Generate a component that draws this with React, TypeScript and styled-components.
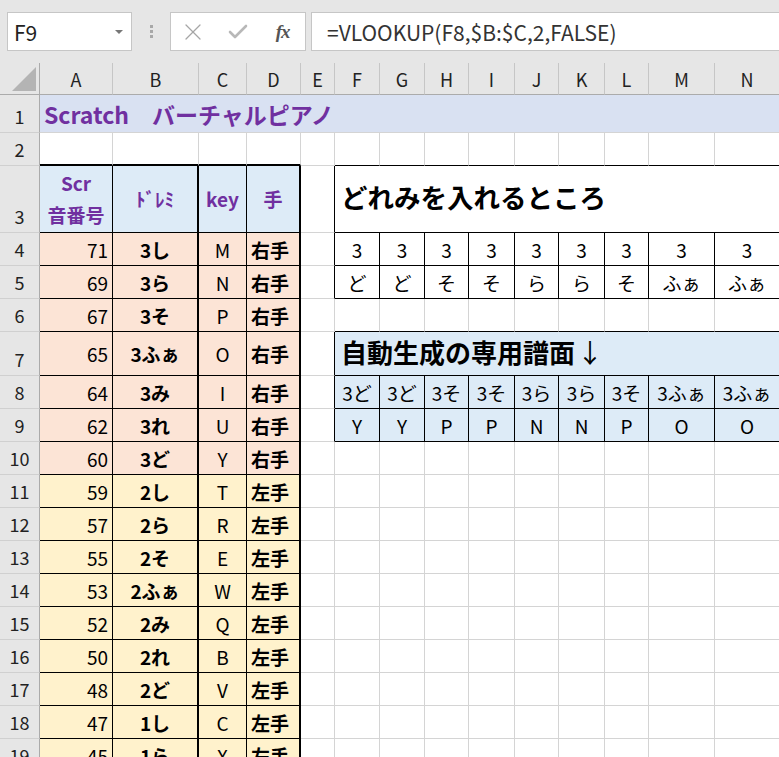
import React from "react";
import styled, { createGlobalStyle } from "styled-components";
import { X, Check } from "lucide-react";

const FONT = `"Noto Sans CJK JP", "Noto Sans", sans-serif`;
const GRID = "#d4d4d4";
const BLACK1 = "1px solid #000";
const BLACK2 = "2px solid #000";
const LAVENDER = "#d9e1f2";
const BLUE = "#ddebf7";
const SALMON = "#fce4d6";
const CREAM = "#fff2cc";
const PURPLE = "#7030a0";

const COLS = ["A", "B", "C", "D", "E", "F", "G", "H", "I", "J", "K", "L", "M", "N"];
const COL_W = [73, 86, 48, 54, 34, 45, 45, 44, 46, 44, 46, 44, 66, 65];
const ROW_H = [38, 33, 67, 33, 33, 33, 44, 33, 33, 33, 33, 33, 33, 33, 33, 33, 33, 33, 33];

const GlobalStyle = createGlobalStyle`
  html, body {
    margin: 0;
    padding: 0;
    background: #e6e6e6;
    overflow: hidden;
  }
  body {
    font-family: ${FONT};
  }
`;

const Page = styled.div`
  width: 779px;
  height: 757px;
  overflow: hidden;
  background: #fff;
`;

/* ---------- formula bar ---------- */

const Toolbar = styled.div`
  height: 63px;
  background: #e6e6e6;
  display: flex;
  align-items: flex-start;
  padding-top: 12px;
  box-sizing: border-box;
`;

const FieldBox = styled.div<{ $w?: number }>`
  height: 39px;
  box-sizing: border-box;
  background: #fff;
  border: 1px solid #c6c6c6;
  display: flex;
  align-items: center;
  ${(p) => (p.$w ? `width: ${p.$w}px;` : "flex: 1;")}
`;

const NameBox = styled(FieldBox)`
  margin-left: 7px;
  padding: 0 7px 0 6px;
  justify-content: space-between;
  font-size: 21px;
  color: #222;
`;

const DropArrow = styled.span`
  width: 0;
  height: 0;
  border-left: 4px solid transparent;
  border-right: 4px solid transparent;
  border-top: 4px solid #777;
  margin-right: 1px;
`;

const Grip = styled.div`
  width: 38px;
  height: 39px;
  display: flex;
  flex-direction: column;
  align-items: center;
  justify-content: center;
  gap: 2px;
`;

const GripDot = styled.span`
  width: 3px;
  height: 3px;
  background: #a8a8a8;
`;

const IconBox = styled(FieldBox)`
  justify-content: center;
`;

const IconSlot = styled.span`
  width: 45px;
  display: flex;
  align-items: center;
  justify-content: center;
`;

const FxMark = styled.span`
  font-family: "Liberation Serif", serif;
  font-style: italic;
  font-weight: bold;
  font-size: 19px;
  color: #555;
  letter-spacing: -1px;
`;

const FormulaBox = styled(FieldBox)`
  margin-left: 5px;
  padding-left: 15px;
  border-right: none;
  font-size: 21px;
  color: #333;
`;

/* ---------- sheet grid ---------- */

const Sheet = styled.div`
  display: grid;
  grid-template-columns: 40px ${COL_W.map((w) => `${w}px`).join(" ")};
  grid-template-rows: 32px ${ROW_H.map((h) => `${h}px`).join(" ")};
  width: 780px;
  font-family: ${FONT};
`;

const Corner = styled.div`
  background: #e6e6e6;
  border-right: 1px solid #ababab;
  border-bottom: 1px solid #ababab;
  display: flex;
  align-items: flex-end;
  justify-content: flex-end;
  padding: 0 3px 3px 0;
`;

const CornerTriangle = styled.div`
  width: 24px;
  height: 24px;
  background: #b4b4b4;
  clip-path: polygon(100% 0, 100% 100%, 0 100%);
`;

const ColHead = styled.div`
  background: #e6e6e6;
  border-right: 1px solid #c6c6c6;
  border-bottom: 1px solid #ababab;
  display: flex;
  align-items: center;
  justify-content: center;
  font-size: 18px;
  color: #222;
`;

const RowHead = styled.div`
  background: #e6e6e6;
  border-right: 1px solid #ababab;
  border-bottom: 1px solid #d0d0d0;
  display: flex;
  align-items: flex-end;
  justify-content: center;
  padding-bottom: 3px;
  box-sizing: border-box;
  font-size: 18px;
  color: #222;
`;

type Align = "left" | "center" | "right";

const justify: Record<Align, string> = {
  left: "flex-start",
  center: "center",
  right: "flex-end",
};

const CellBox = styled.div<{
  $bg: string;
  $right: string;
  $bottom: string;
  $align: Align;
  $bold: boolean;
  $size: number;
  $color: string;
  $span: number;
  $pad: number;
  $lift: number;
}>`
  grid-column: span ${(p) => p.$span};
  box-sizing: border-box;
  min-width: 0;
  display: flex;
  align-items: center;
  justify-content: ${(p) => justify[p.$align]};
  padding: 0 ${(p) => p.$pad}px ${(p) => p.$lift}px;
  background: ${(p) => p.$bg};
  border-right: ${(p) => p.$right};
  border-bottom: ${(p) => p.$bottom};
  font-size: ${(p) => p.$size}px;
  font-weight: ${(p) => (p.$bold ? 700 : 400)};
  color: ${(p) => p.$color};
  white-space: nowrap;
  overflow: hidden;
`;

const TwoLine = styled.div`
  display: flex;
  flex-direction: column;
  align-items: center;
  line-height: 32px;
`;

const ThinArrow = styled.span`
  font-weight: 400;
  margin-left: 2px;
`;

type CellSpec = {
  text?: React.ReactNode;
  bg?: string;
  right?: string;
  bottom?: string;
  align?: Align;
  bold?: boolean;
  size?: number;
  color?: string;
  span?: number;
  pad?: number;
  lift?: number;
};

/* ---------- sheet data ---------- */

const noteTable: [number, string, string, string][] = [
  [71, "3し", "M", "右手"],
  [69, "3ら", "N", "右手"],
  [67, "3そ", "P", "右手"],
  [65, "3ふぁ", "O", "右手"],
  [64, "3み", "I", "右手"],
  [62, "3れ", "U", "右手"],
  [60, "3ど", "Y", "右手"],
  [59, "2し", "T", "左手"],
  [57, "2ら", "R", "左手"],
  [55, "2そ", "E", "左手"],
  [53, "2ふぁ", "W", "左手"],
  [52, "2み", "Q", "左手"],
  [50, "2れ", "B", "左手"],
  [48, "2ど", "V", "左手"],
  [47, "1し", "C", "左手"],
  [45, "1ら", "X", "左手"],
];

const inputOctaves = ["3", "3", "3", "3", "3", "3", "3", "3", "3"];
const inputNotes = ["ど", "ど", "そ", "そ", "ら", "ら", "そ", "ふぁ", "ふぁ"];
const scoreNames = ["3ど", "3ど", "3そ", "3そ", "3ら", "3ら", "3そ", "3ふぁ", "3ふぁ"];
const scoreKeys = ["Y", "Y", "P", "P", "N", "N", "P", "O", "O"];

function buildSheet(): (CellSpec | null)[][] {
  const rows: (CellSpec | null)[][] = ROW_H.map(() => COLS.map(() => ({})));
  const set = (r: number, c: number, spec: CellSpec) => {
    rows[r - 1][c] = { ...rows[r - 1][c], ...spec };
  };
  const cover = (r: number, from: number, to: number) => {
    for (let c = from; c <= to; c++) rows[r - 1][c] = null;
  };

  // title band
  set(1, 0, {
    text: "Scratch　バーチャルピアノ",
    bg: LAVENDER,
    bold: true,
    color: PURPLE,
    size: 23,
    span: 14,
    pad: 4,
    right: "none",
  });
  cover(1, 1, 13);

  // top edges of the tables
  for (let c = 0; c <= 3; c++) set(2, c, { bottom: BLACK2 });
  for (let c = 5; c <= 13; c++) {
    set(2, c, { bottom: BLACK1 });
    set(6, c, { bottom: BLACK1 });
  }

  // note table header
  const headRight = [BLACK1, BLACK2, BLACK1, BLACK2];
  const headText: React.ReactNode[] = [
    <TwoLine key="h">
      <span>Scr</span>
      <span>音番号</span>
    </TwoLine>,
    "ﾄﾞﾚﾐ",
    "key",
    "手",
  ];
  headText.forEach((t, c) =>
    set(3, c, {
      text: t,
      bg: BLUE,
      bold: true,
      color: PURPLE,
      align: "center",
      right: headRight[c],
      bottom: BLACK1,
      lift: c === 0 ? 0 : 2,
    })
  );

  // note table body
  noteTable.forEach(([num, name, key, hand], i) => {
    const r = 4 + i;
    const bg = i < 7 ? SALMON : CREAM;
    set(r, 0, { text: num, bg, align: "right", right: BLACK1, bottom: BLACK1 });
    set(r, 1, { text: name, bg, bold: true, align: "center", right: BLACK2, bottom: BLACK1 });
    set(r, 2, { text: key, bg, align: "center", right: BLACK1, bottom: BLACK1 });
    set(r, 3, { text: hand, bg, bold: true, align: "left", right: BLACK2, bottom: BLACK1 });
  });

  // left edges of the right-hand tables
  [3, 4, 5, 7, 8, 9].forEach((r) => set(r, 4, { right: BLACK1 }));

  // input area
  set(3, 5, {
    text: "どれみを入れるところ",
    bold: true,
    size: 26.5,
    span: 9,
    pad: 6,
    lift: 6,
    right: BLACK1,
    bottom: BLACK1,
  });
  cover(3, 6, 13);
  inputOctaves.forEach((t, i) =>
    set(4, 5 + i, { text: t, align: "center", right: BLACK1, bottom: BLACK1 })
  );
  inputNotes.forEach((t, i) =>
    set(5, 5 + i, { text: t, align: "center", right: BLACK1, bottom: BLACK1 })
  );

  // generated score
  set(7, 5, {
    text: (
      <>
        自動生成の専用譜面<ThinArrow>↓</ThinArrow>
      </>
    ),
    bg: BLUE,
    bold: true,
    size: 26,
    span: 9,
    pad: 6,
    lift: 4,
    right: BLACK1,
    bottom: BLACK1,
  });
  cover(7, 6, 13);
  scoreNames.forEach((t, i) =>
    set(8, 5 + i, { text: t, bg: BLUE, align: "center", right: BLACK1, bottom: BLACK1, pad: 0 })
  );
  scoreKeys.forEach((t, i) =>
    set(9, 5 + i, { text: t, bg: BLUE, align: "center", right: BLACK1, bottom: BLACK1 })
  );

  return rows;
}

const sheet = buildSheet();

function Cell({ spec }: { spec: CellSpec }) {
  return (
    <CellBox
      $bg={spec.bg ?? "#fff"}
      $right={spec.right ?? `1px solid ${GRID}`}
      $bottom={spec.bottom ?? `1px solid ${GRID}`}
      $align={spec.align ?? "left"}
      $bold={spec.bold ?? false}
      $size={spec.size ?? 19}
      $color={spec.color ?? "#000"}
      $span={spec.span ?? 1}
      $pad={spec.pad ?? 4}
      $lift={spec.lift ?? 0}
    >
      {spec.text}
    </CellBox>
  );
}

export default function App() {
  return (
    <Page>
      <GlobalStyle />
      <Toolbar>
        <NameBox $w={125}>
          <span>F9</span>
          <DropArrow />
        </NameBox>
        <Grip>
          <GripDot />
          <GripDot />
          <GripDot />
        </Grip>
        <IconBox $w={136}>
          <IconSlot>
            <X size={28} strokeWidth={1.1} color="#a6a6a6" />
          </IconSlot>
          <IconSlot>
            <Check size={24} strokeWidth={2.6} color="#b8b8b8" />
          </IconSlot>
          <IconSlot>
            <FxMark>fx</FxMark>
          </IconSlot>
        </IconBox>
        <FormulaBox>=VLOOKUP(F8,$B:$C,2,FALSE)</FormulaBox>
      </Toolbar>
      <Sheet>
        <Corner>
          <CornerTriangle />
        </Corner>
        {COLS.map((c) => (
          <ColHead key={c}>{c}</ColHead>
        ))}
        {sheet.map((row, r) => (
          <React.Fragment key={r}>
            <RowHead>{r + 1}</RowHead>
            {row.map((spec, c) => (spec ? <Cell key={c} spec={spec} /> : null))}
          </React.Fragment>
        ))}
      </Sheet>
    </Page>
  );
}
